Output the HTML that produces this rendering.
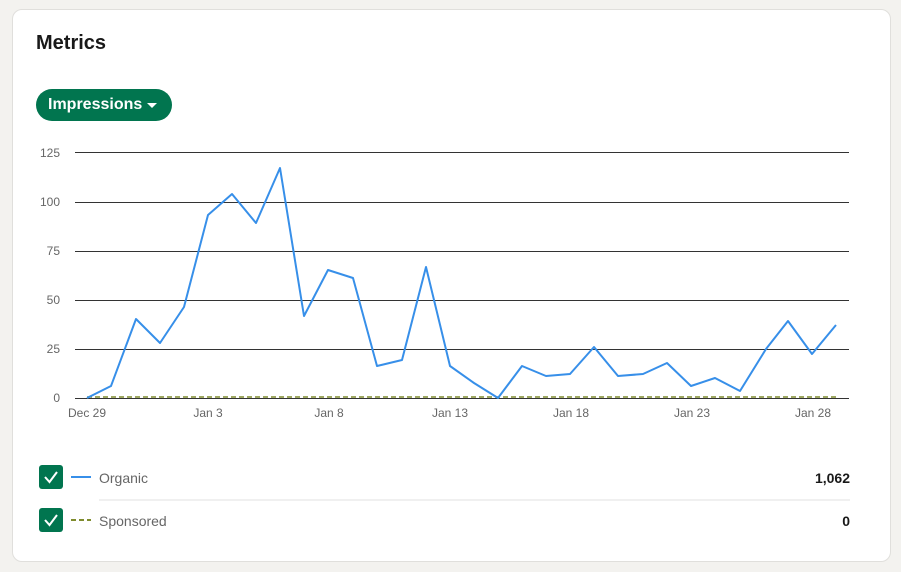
<!DOCTYPE html>
<html><head><meta charset="utf-8"><style>
body{margin:0;width:901px;height:572px;background:#f3f2ef;font-family:"Liberation Sans","DejaVu Sans",sans-serif;position:relative;overflow:hidden}
.card{position:absolute;left:12px;top:9px;width:877px;height:551px;background:#fff;border:1px solid #e0dfdc;border-radius:10px}
</style></head><body>
<div class="card"></div>
<div style="position:absolute;left:36px;top:32px;font-size:20px;font-weight:bold;color:#191919">Metrics</div>
<div style="position:absolute;left:36px;top:89px;width:136px;height:32px;border-radius:16px;background:#01754f;color:#fff;font-weight:bold;font-size:16px;line-height:32px;box-sizing:border-box;padding-left:12px">Impressions<span style="position:absolute;left:111px;top:14px;width:0;height:0;border-left:5px solid transparent;border-right:5px solid transparent;border-top:5px solid #fff"></span></div>
<svg width="901" height="572" style="position:absolute;left:0;top:0" font-family="Liberation Sans, DejaVu Sans, sans-serif">
<g stroke="#333" stroke-width="1" shape-rendering="crispEdges">
<line x1="75" y1="152.5" x2="849" y2="152.5"/><line x1="75" y1="202.5" x2="849" y2="202.5"/><line x1="75" y1="251.5" x2="849" y2="251.5"/><line x1="75" y1="300.5" x2="849" y2="300.5"/><line x1="75" y1="349.5" x2="849" y2="349.5"/><line x1="75" y1="398.5" x2="849" y2="398.5"/>
</g>
<g font-size="12" fill="#666" text-anchor="end">
<text x="60" y="157">125</text><text x="60" y="206">100</text><text x="60" y="255">75</text><text x="60" y="304">50</text><text x="60" y="353">25</text><text x="60" y="402">0</text>
</g>
<g font-size="12" fill="#666" text-anchor="middle">
<text x="87" y="417">Dec 29</text><text x="208" y="417">Jan 3</text><text x="329" y="417">Jan 8</text><text x="450" y="417">Jan 13</text><text x="571" y="417">Jan 18</text><text x="692" y="417">Jan 23</text><text x="813" y="417">Jan 28</text>
</g>
<line x1="87" y1="397" x2="836" y2="397" stroke="#7f8c2e" stroke-width="1.5" stroke-dasharray="5,3"/>
<polyline fill="none" stroke="#378fe9" stroke-width="2" stroke-linejoin="round" points="87,398 111,386 136,319 160,343 184,307 208,215 232,194 256,223 280,168 304,316 328,270 353,278 377,366 402,360 426,267 450,366 474,383 498,398 522,366 546,376 570,374 594,347 618,376 643,374 667,363 691,386 715,378 740,391 766,349 788,321 812,354 836,325"/>
<line x1="99" y1="500" x2="850" y2="500" stroke="#e0e0e0"/>
<rect x="39" y="465" width="24" height="24" rx="3" fill="#01754f"/>
<polyline points="45,477 49.5,482 57,472" fill="none" stroke="#fff" stroke-width="2"/>
<rect x="39" y="508" width="24" height="24" rx="3" fill="#01754f"/>
<polyline points="45,520 49.5,525 57,515" fill="none" stroke="#fff" stroke-width="2"/>
<line x1="71" y1="477" x2="91" y2="477" stroke="#378fe9" stroke-width="2"/>
<line x1="71" y1="520" x2="91" y2="520" stroke="#7f8c2e" stroke-width="2" stroke-dasharray="5,3"/>
<text x="99" y="483" font-size="14" fill="#666">Organic</text>
<text x="99" y="526" font-size="14" fill="#666">Sponsored</text>
<text x="850" y="483" font-size="14" font-weight="bold" fill="#191919" text-anchor="end">1,062</text>
<text x="850" y="526" font-size="14" font-weight="bold" fill="#191919" text-anchor="end">0</text>
</svg>
</body></html>
